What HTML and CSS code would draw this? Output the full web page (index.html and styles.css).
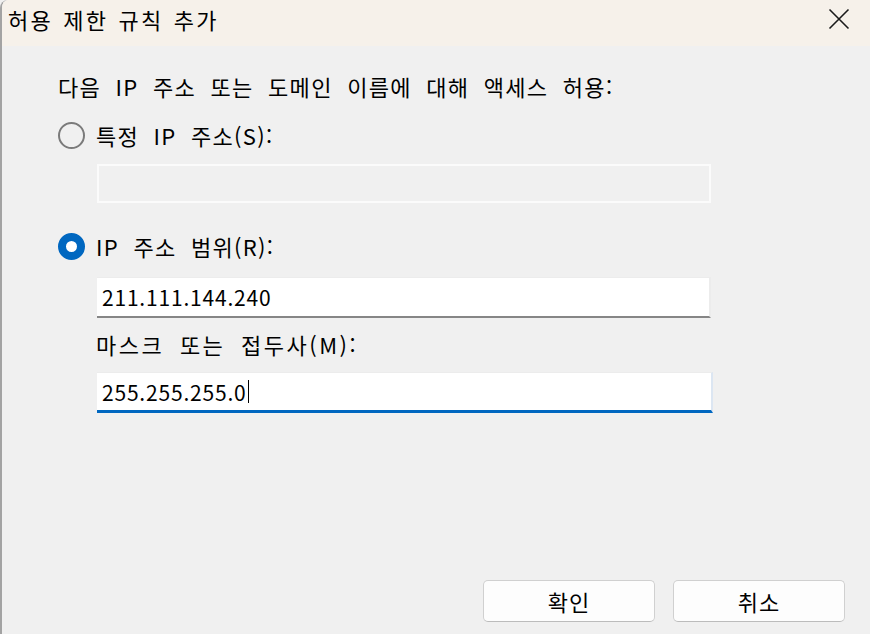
FILE: index.html
```html
<!DOCTYPE html>
<html lang="ko">
<head>
<meta charset="utf-8">
<title>허용 제한 규칙 추가</title>
<link rel="stylesheet" href="styles.css">
</head>
<body>
<div class="dialog">
  <div class="titlebar">
    <span class="title">허용 제한 규칙 추가</span>
    <span class="close" aria-label="닫기">
      <svg width="22" height="22" viewBox="0 0 22 22"><path d="M1.5 1.5 L20.5 20.5 M20.5 1.5 L1.5 20.5" stroke="#1a1a1a" stroke-width="1.6" fill="none"/></svg>
    </span>
  </div>
  <div class="content">
    <div class="intro">다음 IP 주소 또는 도메인 이름에 대해 액세스 허용:</div>
    <label class="radio-row row-single">
      <span class="radio"></span>
      <span class="radio-text">특정 IP 주소(S):</span>
    </label>
    <div class="field field-disabled"></div>
    <label class="radio-row row-range">
      <span class="radio radio-checked"></span>
      <span class="radio-text">IP 주소 범위(R):</span>
    </label>
    <div class="field field-normal"><span class="value">211.111.144.240</span></div>
    <div class="sublabel">마스크 또는 접두사(M):</div>
    <div class="field field-focus"><span class="value">255.255.255.0</span><span class="caret"></span></div>
    <div class="spacer"></div>
    <div class="buttons">
      <button class="btn">확인</button>
      <button class="btn">취소</button>
    </div>
  </div>
</div>
</body>
</html>
```
FILE: styles.css
```css
* { box-sizing: border-box; }
html, body { margin: 0; padding: 0; }
body {
  width: 870px;
  height: 634px;
  overflow: hidden;
  background: #f0f0f0;
  font-family: "Noto Sans CJK KR", "Noto Sans", sans-serif;
  color: #000;
}
.dialog {
  width: 870px;
  height: 634px;
  display: flex;
  flex-direction: column;
  border-left: 2px solid #a3a3a3;
  border-top-left-radius: 8px;
  background: #f0f0f0;
  overflow: hidden;
}
.titlebar {
  height: 46px;
  flex: none;
  background: #f6f1ea;
  display: flex;
  align-items: center;
  justify-content: space-between;
  padding: 0 20px 0 6px;
}
.title {
  font-size: 22px;
  line-height: 30px;
  margin-top: -8px;
  letter-spacing: 2.2px;
  word-spacing: 2px;
}
.close {
  width: 22px;
  height: 22px;
  display: block;
  margin-top: -8px;
}
.close svg { display: block; }
.content {
  flex: 1;
  display: flex;
  flex-direction: column;
  padding: 28px 0 12px 56px;
  font-size: 22px;
  letter-spacing: 1.3px;
  word-spacing: 7px;
}
.intro {
  line-height: 24px;
  height: 24px;
}
.radio-row {
  display: flex;
  align-items: center;
  gap: 11px;
  height: 26px;
  line-height: 26px;
}
.row-single { margin-top: 24px; }
.row-range { margin-top: 30px; }
.radio {
  width: 27px;
  height: 27px;
  border-radius: 50%;
  border: 2px solid #7b7b7b;
  background: #f0f0f0;
  flex: none;
}
.radio-checked {
  border: 8.5px solid #0067c0;
  background: #ffffff;
}
.field {
  width: 614px;
  margin-left: 39px;
  display: flex;
  align-items: center;
  padding-left: 5px;
  font-size: 21px;
  letter-spacing: 0.6px;
  word-spacing: 0;
}
.field-disabled {
  margin-top: 16px;
  height: 39px;
  border: 2px solid #fbfbfb;
  background: #f0f0f0;
}
.field-normal {
  margin-top: 18px;
  height: 41px;
  background: #ffffff;
  border-top: 1px solid #ececec;
  border-right: 2px solid #ececec;
  border-bottom: 2px solid #868686;
}
.sublabel {
  margin-top: 13px;
  margin-left: 38px;
  height: 26px;
  line-height: 26px;
  letter-spacing: 2.5px;
}
.field-focus {
  margin-top: 15px;
  height: 41px;
  width: 616px;
  background: #ffffff;
  border-top: 1px solid #ececec;
  border-right: 2px solid #dce6f2;
  border-bottom: 3px solid #0067c0;
}
.value {
  line-height: 26px;
  letter-spacing: 0.8px;
}
.caret {
  width: 1.5px;
  height: 23px;
  background: #000;
  margin-left: 1px;
}
.spacer { flex: 1; }
.buttons {
  display: flex;
  gap: 18px;
  justify-content: flex-end;
  padding-right: 25px;
}
.btn {
  width: 172px;
  height: 42px;
  background: #fdfdfd;
  border: 1px solid #d0d0d0;
  border-bottom-color: #bcbcbc;
  border-radius: 5px;
  font-family: inherit;
  font-size: 22px;
  color: #000;
  padding: 0;
  letter-spacing: 1px;
  word-spacing: 0;
}
```
